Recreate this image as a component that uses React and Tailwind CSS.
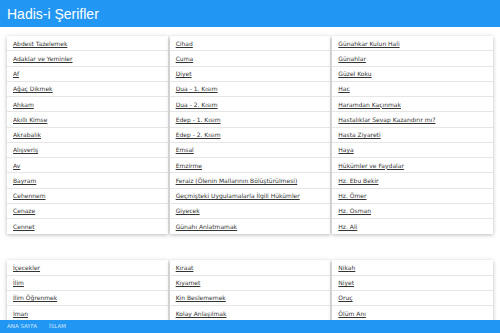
import React from 'react';

const bolum1 = [
  ['Abdest Tazelemek', 'Adaklar ve Yeminler', 'Af', 'Ağaç Dikmek', 'Ahkam', 'Akıllı Kimse', 'Akrabalık', 'Alışveriş', 'Av', 'Bayram', 'Cehennem', 'Cenaze', 'Cennet'],
  ['Cihad', 'Cuma', 'Diyet', 'Dua - 1. Kısım', 'Dua - 2. Kısım', 'Edep - 1. Kısım', 'Edep - 2. Kısım', 'Emsal', 'Emzirme', 'Feraiz (Ölenin Mallarının Bölüştürülmesi)', 'Geçmişteki Uygulamalarla İlgili Hükümler', 'Giyecek', 'Günahı Anlatmamak'],
  ['Günahkar Kulun Hali', 'Günahlar', 'Güzel Koku', 'Hac', 'Haramdan Kaçınmak', 'Hastalıklar Sevap Kazandırır mı?', 'Hasta Ziyareti', 'Haya', 'Hükümler ve Faydalar', 'Hz. Ebu Bekir', 'Hz. Ömer', 'Hz. Osman', 'Hz. Ali'],
];

const bolum2 = [
  ['İçecekler', 'İlim', 'İlim Öğrenmek', 'İman'],
  ['Kıraat', 'Kıyamet', 'Kin Beslememek', 'Kolay Anlaşılmak'],
  ['Nikah', 'Niyet', 'Oruç', 'Ölüm Anı'],
];

// Tek bir konu kartı
const Kart = ({ konular }) => (
  <div className="bg-white shadow-[0_1px_4px_rgba(0,0,0,0.28)]">
    {konular.map((konu, i) => (
      <div
        key={konu}
        className={`h-[15.25px] flex items-center pl-[6px] ${i < konular.length - 1 ? 'border-b border-[#e6e6e6]' : ''}`}
      >
        <a href="#" className="text-[6px] leading-[9px] text-[#333] underline decoration-1 underline-offset-[1px] whitespace-nowrap">
          {konu}
        </a>
      </div>
    ))}
  </div>
);

const App = () => {
  return (
    <div className="h-screen overflow-hidden bg-white" style={{ fontFamily: '"DejaVu Sans", Verdana, sans-serif' }}>
      <header className="h-[27px] bg-[#2196f3] flex items-center px-[7px]">
        <h1 className="text-white text-[14px] leading-none" style={{ fontFamily: '"Liberation Sans", Arial, sans-serif' }}>
          Hadis-i Şerifler
        </h1>
      </header>

      <main className="px-[7px] pt-[9px]">
        <div className="grid grid-cols-3 gap-[2px]">
          {bolum1.map((k, i) => <Kart key={i} konular={k} />)}
        </div>
        <div className="grid grid-cols-3 gap-[2px] mt-[26px]">
          {bolum2.map((k, i) => <Kart key={i} konular={k} />)}
        </div>
      </main>

      <footer className="fixed bottom-0 left-0 right-0 h-[13px] bg-[#2196f3] flex items-center gap-[12px] px-[7px]">
        <span className="text-[5.5px] text-[#cfe6fb] leading-none">ANA SAYFA</span>
        <span className="text-[5.5px] text-[#cfe6fb] leading-none">İSLAM</span>
      </footer>
    </div>
  );
};

export default App;
